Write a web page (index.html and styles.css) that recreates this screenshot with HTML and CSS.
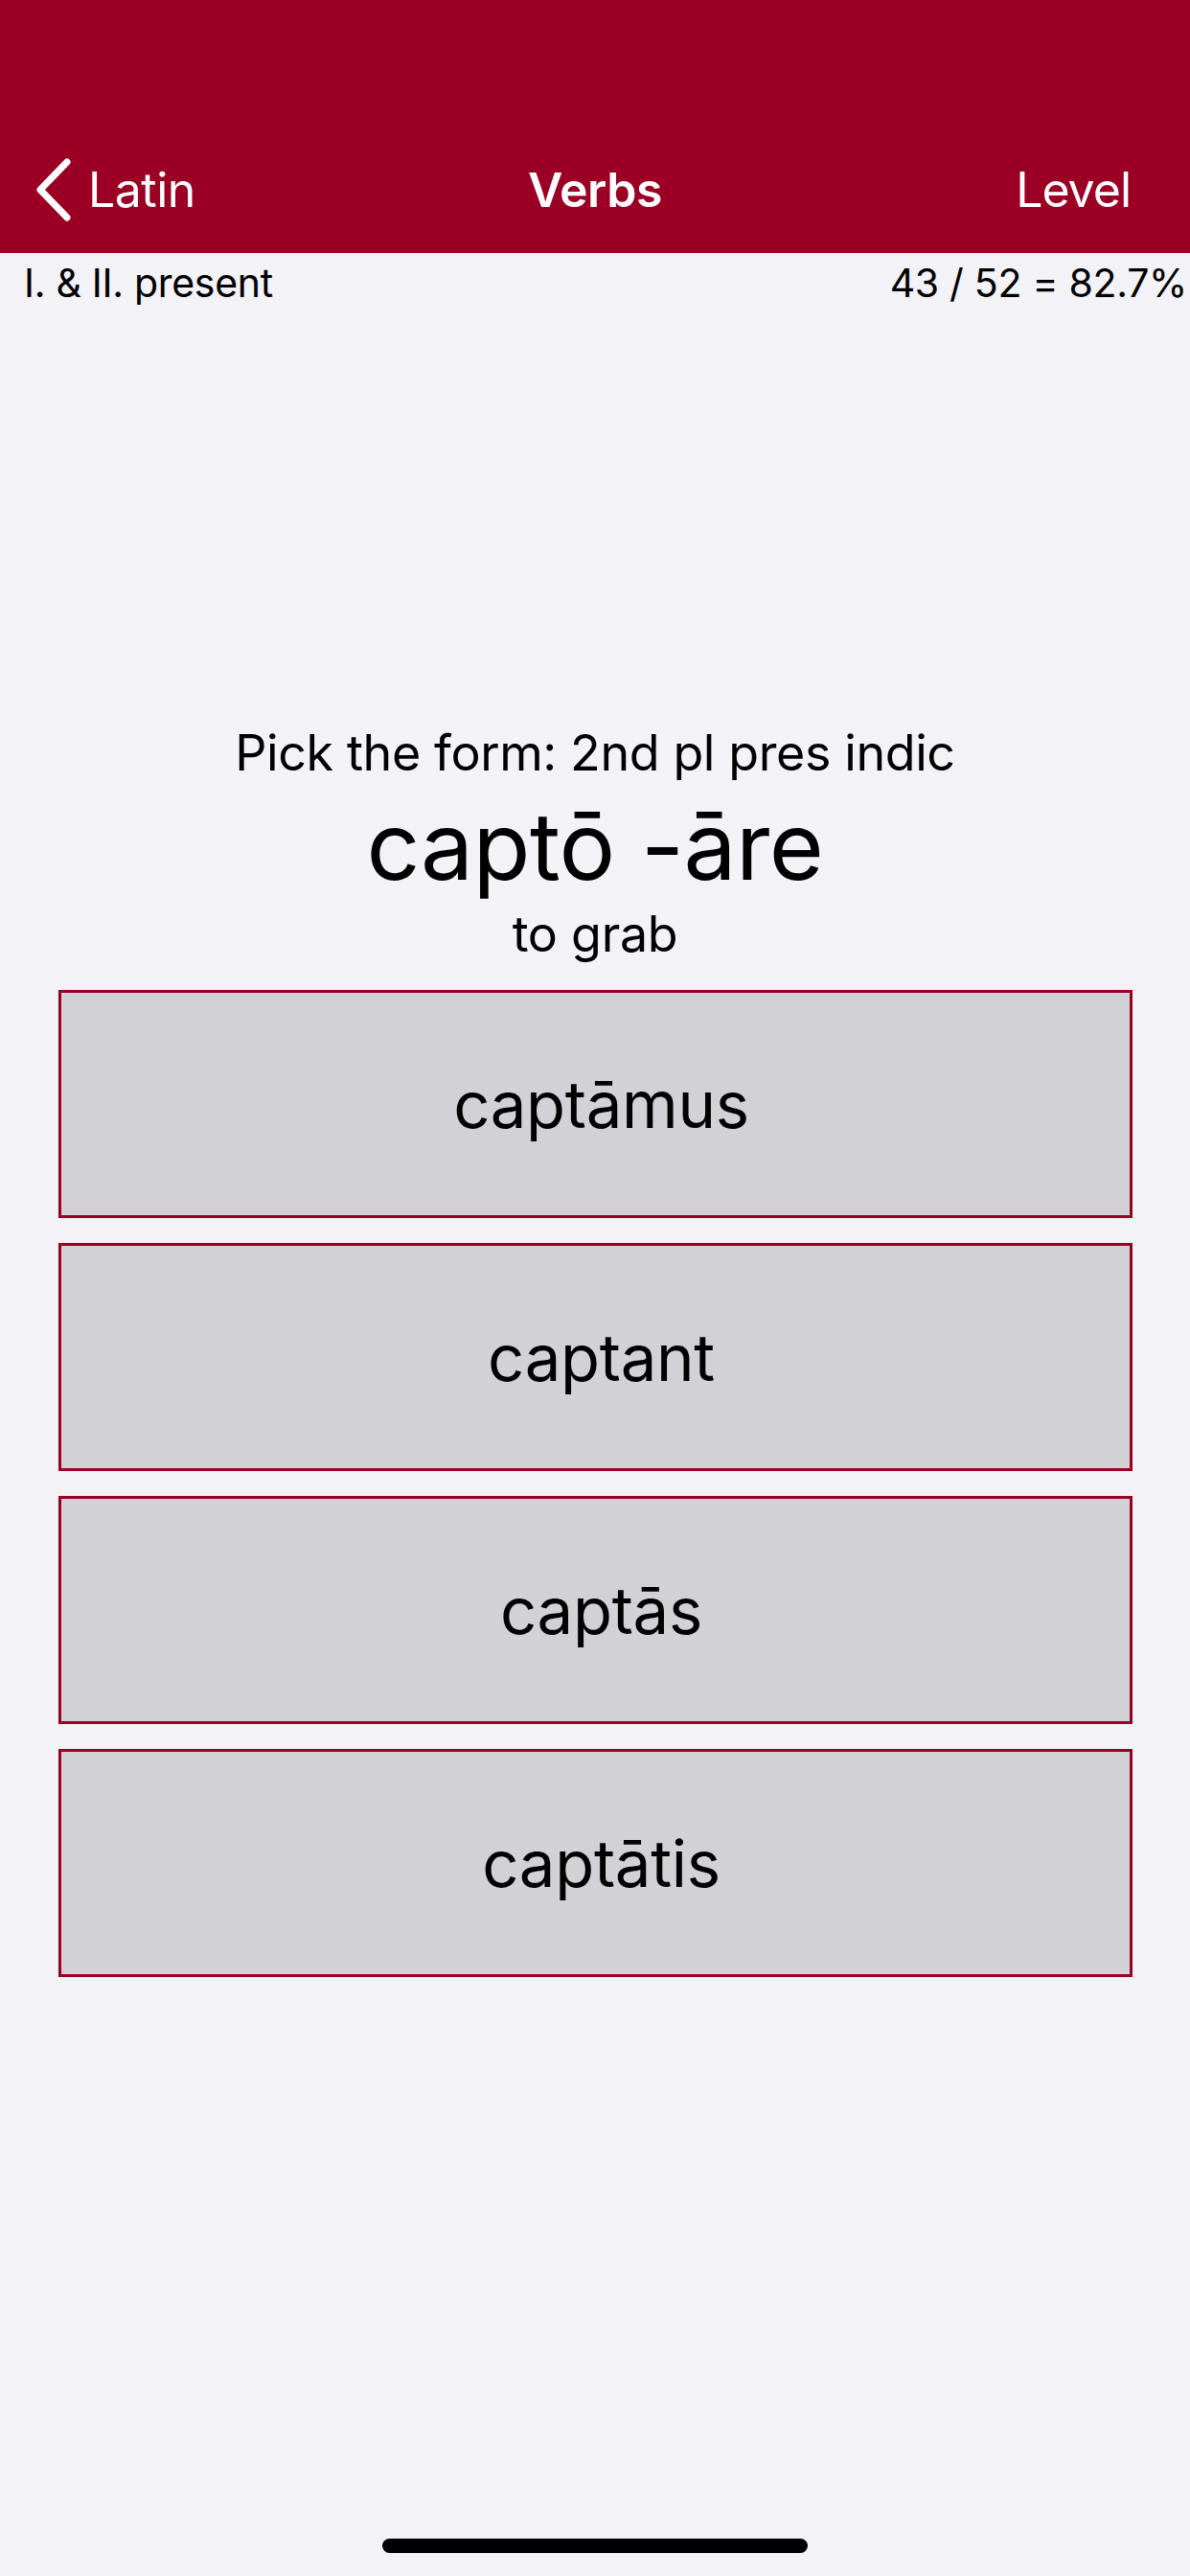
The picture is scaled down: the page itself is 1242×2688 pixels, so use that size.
FILE: index.html
```html
<!DOCTYPE html>
<html>
<head>
<meta charset="utf-8">
<link rel="stylesheet" href="styles.css">
</head>
<body>
<div class="screen">
  <header class="topbar">
    <div class="statusbar"></div>
    <nav class="navbar">
      <div class="nav-left">
        <svg class="chev" width="40" height="66" viewBox="0 0 40 66"><path d="M34 4 L6 33 L34 62" fill="none" stroke="#fff" stroke-width="7" stroke-linecap="round" stroke-linejoin="round"/></svg>
        <span class="nav-back">Latin</span>
      </div>
      <div class="nav-title">Verbs</div>
      <div class="nav-right">Level</div>
    </nav>
  </header>
  <div class="subheader">
    <span>I. &amp; II. present</span>
    <span>43 / 52 = 82.7%</span>
  </div>
  <section class="question">
    <div class="prompt">Pick the form: 2nd pl pres indic</div>
    <div class="lemma">captō -āre</div>
    <div class="gloss">to grab</div>
  </section>
  <section class="choices">
    <div class="choice">captāmus</div>
    <div class="choice">captant</div>
    <div class="choice">captās</div>
    <div class="choice">captātis</div>
  </section>
  <div class="home-indicator"></div>
</div>
</body>
</html>
```

FILE: styles.css
```css
* { box-sizing: border-box; }
html, body { margin: 0; padding: 0; }
body {
  width: 1242px;
  height: 2688px;
  background: #f2f2f7;
  font-family: Inter, "Noto Sans", sans-serif;
  color: #000;
  overflow: hidden;
}
.screen {
  position: relative;
  width: 1242px;
  height: 2688px;
}
.topbar { background: #9b0024; color: #fff; }
.statusbar { height: 132px; }
.navbar {
  height: 132px;
  display: grid;
  grid-template-columns: 1fr auto 1fr;
  align-items: center;
  font-size: 50px;
}
.nav-left { display: flex; align-items: center; padding-left: 36px; gap: 16px; }
.chev { display: block; }
.nav-back { letter-spacing: -0.5px; }
.nav-title { font-weight: 600; letter-spacing: -0.5px; }
.nav-right { text-align: right; padding-right: 62px; letter-spacing: -1px; }
.subheader {
  height: 62px;
  display: flex;
  justify-content: space-between;
  align-items: center;
  padding: 0 3px 0 25px;
  font-size: 41px;
  letter-spacing: -0.3px;
}
.question {
  margin-top: 430px;
  text-align: center;
}
.prompt { font-size: 52px; line-height: 60px; letter-spacing: -0.4px; }
.lemma { font-size: 98px; line-height: 134px; letter-spacing: -0.5px; }
.gloss { font-size: 52px; line-height: 50px; letter-spacing: -0.3px; }
.choices {
  margin: 33px 60px 0 61px;
  display: flex;
  flex-direction: column;
  gap: 26px;
}
.choice {
  height: 238px;
  border: 3px solid #990024;
  background: #d1d1d6;
  display: flex;
  align-items: center;
  justify-content: center;
  padding-left: 12px;
  font-size: 67px;
  letter-spacing: -0.3px;
}
.home-indicator {
  position: absolute;
  left: 399px;
  top: 2649px;
  width: 444px;
  height: 15px;
  border-radius: 8px;
  background: #000;
}
```
